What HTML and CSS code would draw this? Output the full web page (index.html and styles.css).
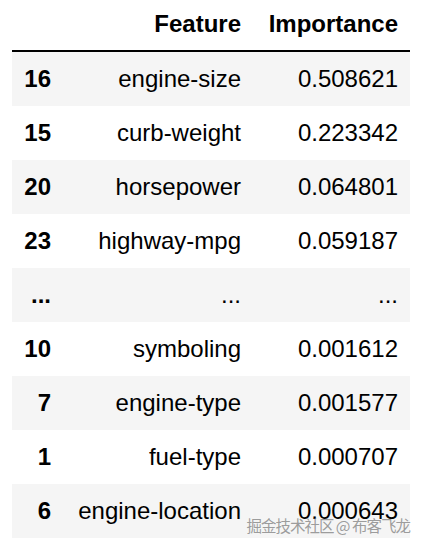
FILE: index.html
```html
<!DOCTYPE html>
<html>
<head>
<meta charset="utf-8">
<link rel="stylesheet" href="styles.css">
</head>
<body>
<div class="frame">
  <table class="df">
    <colgroup>
      <col class="c-idx">
      <col class="c-feat">
      <col class="c-imp">
    </colgroup>
    <thead>
      <tr><th></th><th>Feature</th><th>Importance</th></tr>
    </thead>
    <tbody>
      <tr><th>16</th><td>engine-size</td><td>0.508621</td></tr>
      <tr><th>15</th><td>curb-weight</td><td>0.223342</td></tr>
      <tr><th>20</th><td>horsepower</td><td>0.064801</td></tr>
      <tr><th>23</th><td>highway-mpg</td><td>0.059187</td></tr>
      <tr><th>...</th><td>...</td><td>...</td></tr>
      <tr><th>10</th><td>symboling</td><td>0.001612</td></tr>
      <tr><th>7</th><td>engine-type</td><td>0.001577</td></tr>
      <tr><th>1</th><td>fuel-type</td><td>0.000707</td></tr>
      <tr><th>6</th><td>engine-location</td><td>0.000643</td></tr>
    </tbody>
  </table>
  <div class="watermark">掘金技术社区 @ 布客飞龙</div>
</div>
</body>
</html>
```
FILE: styles.css
```css
html, body {
  margin: 0;
  padding: 0;
  background: #ffffff;
}

.frame {
  position: relative;
  width: 424px;
  height: 546px;
  overflow: hidden;
}

.df {
  margin-left: 12px;
  width: 398px;
  table-layout: fixed;
  border-collapse: collapse;
  border-spacing: 0;
  font-family: "Liberation Sans", Arial, sans-serif;
  font-size: 24px;
  line-height: 24px;
  color: #000;
}

.c-idx { width: 51px; }
.c-feat { width: 190px; }
.c-imp { width: 157px; }

.df th,
.df td {
  text-align: right;
  padding: 15px 12px 15px 12px;
  white-space: nowrap;
  vertical-align: middle;
}

.df thead th {
  font-weight: bold;
  padding: 12px 12px 14px 12px;
  border-bottom: 2px solid #000;
}

.df tbody th {
  font-weight: bold;
}

.df tbody td {
  font-weight: normal;
}

.df tbody tr:nth-child(odd) {
  background: #f5f5f5;
}

.watermark {
  position: absolute;
  right: 14px;
  top: 513px;
  font-family: "Noto Sans CJK SC", "Noto Sans", sans-serif;
  font-size: 15.5px;
  letter-spacing: -1px;
  line-height: 24px;
  color: rgba(140, 140, 140, 0.85);
  white-space: nowrap;
}
```
